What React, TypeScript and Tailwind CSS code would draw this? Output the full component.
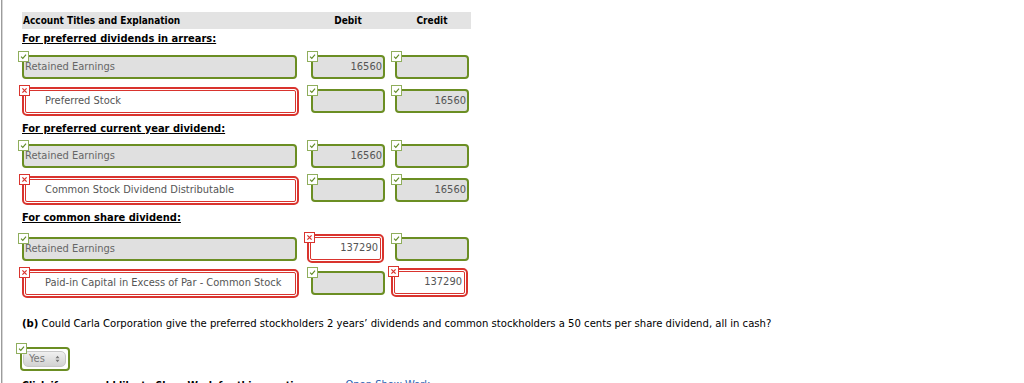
import React from 'react'

type Cell = { text?: string; ok: boolean }
type Row = { account: Cell; debit: Cell; credit: Cell }
type Section = { title: string; titleGap: string; rowsGap: string; rows: Row[] }

const sections: Section[] = [
  {
    title: 'For preferred dividends in arrears:',
    titleGap: 'mt-[3px]',
    rowsGap: 'mt-[9px]',
    rows: [
      { account: { text: 'Retained Earnings', ok: true }, debit: { text: '16560', ok: true }, credit: { ok: true } },
      { account: { text: 'Preferred Stock', ok: false }, debit: { ok: true }, credit: { text: '16560', ok: true } },
    ],
  },
  {
    title: 'For preferred current year dividend:',
    titleGap: 'mt-[9px]',
    rowsGap: 'mt-[8px]',
    rows: [
      { account: { text: 'Retained Earnings', ok: true }, debit: { text: '16560', ok: true }, credit: { ok: true } },
      { account: { text: 'Common Stock Dividend Distributable', ok: false }, debit: { ok: true }, credit: { text: '16560', ok: true } },
    ],
  },
  {
    title: 'For common share dividend:',
    titleGap: 'mt-[9px]',
    rowsGap: 'mt-[12px]',
    rows: [
      { account: { text: 'Retained Earnings', ok: true }, debit: { text: '137290', ok: false }, credit: { ok: true } },
      { account: { text: 'Paid-in Capital in Excess of Par - Common Stock', ok: false }, debit: { ok: true }, credit: { text: '137290', ok: false } },
    ],
  },
]

function Check() {
  return (
    <span className="absolute -left-[6px] -top-[6px] z-10 flex h-[11px] w-[11px] items-center justify-center border border-[#8fae5c] bg-white">
      <svg viewBox="0 0 10 10" className="h-[7px] w-[7px]">
        <path d="M1.5 5.2 L4 7.6 L8.6 2.4" fill="none" stroke="#5f8a24" strokeWidth="1.6" />
      </svg>
    </span>
  )
}

function Cross() {
  return (
    <span className="absolute -left-[7px] -top-[6px] z-10 flex h-[11px] w-[11px] items-center justify-center border border-[#d9342e] bg-white">
      <svg viewBox="0 0 10 10" className="h-[7px] w-[7px]">
        <path d="M2 2 L8 8 M8 2 L2 8" fill="none" stroke="#d9342e" strokeWidth="1.8" />
      </svg>
    </span>
  )
}

function AccountField({ cell }: { cell: Cell }) {
  if (cell.ok) {
    return (
      <div className="relative flex h-[24px] w-[275px] items-center rounded-[4px] border-2 border-[#6b8e23] bg-[#e0e0e0] pl-[1px] text-[11px] text-[#666]">
        <Check />
        {cell.text}
      </div>
    )
  }
  return (
    <div className="relative ml-[3px] mt-[1px] flex h-[23px] w-[271px] items-center rounded-[2px] border border-[#d9342e] bg-white pl-[19px] text-[11px] text-[#555] outline-2 outline-offset-1 outline-[#d9342e]">
      <Cross />
      {cell.text}
    </div>
  )
}

function AmountField({ cell }: { cell: Cell }) {
  if (cell.ok) {
    return (
      <div className="relative flex h-[24px] w-[74px] items-center justify-end rounded-[4px] border-2 border-[#6b8e23] bg-[#e0e0e0] pr-[1px] text-[11px] text-[#555]">
        <Check />
        {cell.text}
      </div>
    )
  }
  return (
    <div className="relative ml-[-1px] flex h-[23px] w-[71px] items-center justify-end rounded-[2px] border border-[#d9342e] bg-white pr-[2px] text-[11px] text-[#555] outline-2 outline-offset-1 outline-[#d9342e]">
      <Cross />
      {cell.text}
    </div>
  )
}

function EntryRow({ row }: { row: Row }) {
  return (
    <div className="flex h-[24px]">
      <div className="w-[276px]">
        <AccountField cell={row.account} />
      </div>
      <div className="ml-[13px] w-[74px]">
        <AmountField cell={row.debit} />
      </div>
      <div className="ml-[10px] w-[74px]">
        <AmountField cell={row.credit} />
      </div>
    </div>
  )
}

export default function App() {
  return (
    <div
      className="flex min-h-screen bg-white text-black"
      style={{ fontFamily: '"DejaVu Sans Condensed", "DejaVu Sans", sans-serif' }}
    >
      <div className="ml-px w-px bg-[#9c9c9c]" />
      <div className="w-px bg-[#d6d6d6]" />

      <div className="flex-1 pl-[19px] pt-[12px]">
        {/* journal table */}
        <div className="flex h-[17px] w-[449px] items-center bg-[#e3e3e3] text-[10px] font-bold">
          <div className="w-[289px] pl-[1px]">Account Titles and Explanation</div>
          <div className="w-[74px] text-center">Debit</div>
          <div className="ml-[10px] w-[74px] text-center">Credit</div>
        </div>

        {sections.map((s) => (
          <div key={s.title}>
            <div className={`${s.titleGap} h-[14px] text-[11px] font-bold leading-[14px] underline`}>{s.title}</div>
            <div className={`${s.rowsGap} flex flex-col gap-[10px]`}>
              {s.rows.map((r, i) => (
                <EntryRow key={i} row={r} />
              ))}
            </div>
          </div>
        ))}

        {/* part b */}
        <div className="mt-[22px] h-[14px] text-[11.2px] leading-[14px]">
          <span className="font-bold">(b)</span> Could Carla Corporation give the preferred stockholders 2 years’ dividends and common
          stockholders a 50 cents per share dividend, all in cash?
        </div>

        <div className="relative ml-[-2px] mt-[16px] flex h-[24px] w-[50px] items-center rounded-[4px] border-2 border-[#6b8e23] bg-white pl-[1px]">
          <Check />
          <div className="flex h-[16px] w-[43px] items-center justify-between rounded-[5px] border border-[#c8c8c8] bg-gradient-to-b from-[#f0f0f0] to-[#d2d2d2] px-[5px] text-[11px] text-[#777]">
            <span>Yes</span>
            <svg viewBox="0 0 6 10" className="h-[8px] w-[5px]">
              <path d="M0.5 4 L3 1 L5.5 4 Z M0.5 6 L3 9 L5.5 6 Z" fill="#777" />
            </svg>
          </div>
        </div>

        <div className="mt-[7px] flex items-start gap-[35px] text-[11px] leading-[14px]">
          <span className="text-[10.5px] font-bold leading-[14px]">Click if you would like to Show Work for this question:</span>
          <span className="text-[#2a5db0]">Open Show Work</span>
        </div>
      </div>
    </div>
  )
}
